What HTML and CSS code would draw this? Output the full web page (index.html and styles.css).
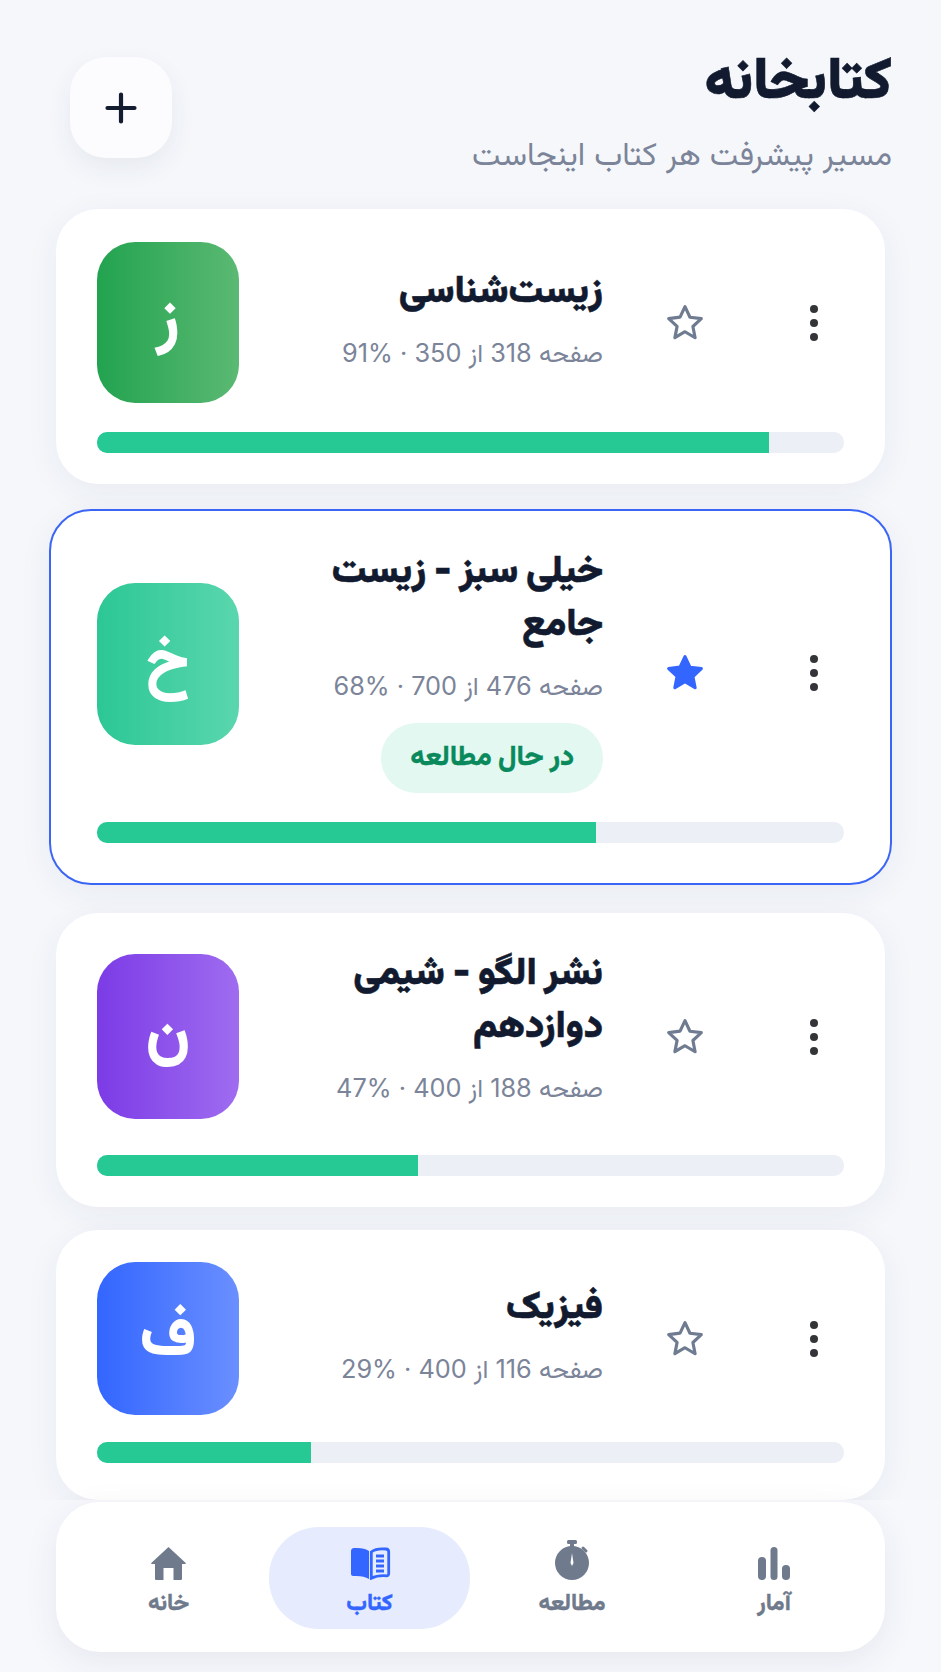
FILE: index.html
```html
<!DOCTYPE html>
<html lang="fa" dir="rtl">
<head>
<meta charset="utf-8">
<title>کتابخانه</title>
<link rel="stylesheet" href="styles.css">
</head>
<body>
<main class="page">
  <header class="header">
    <div class="heading">
      <h1 class="title">کتابخانه</h1>
      <p class="subtitle">مسیر پیشرفت هر کتاب اینجاست</p>
    </div>
    <button class="add" aria-label="افزودن">
      <svg width="32" height="32" viewBox="0 0 32 32"><path d="M16 2.500v27M2.500 16h27" stroke="#141c30" stroke-width="4.200" stroke-linecap="round" fill="none"/></svg>
    </button>
  </header>

  <section class="list">
    <article class="card">
      <div class="row row-a">
        <span class="more"><i></i><i></i><i></i></span>
        <span class="star"><svg width="40" height="40" viewBox="0 0 38 38"><path class="star-o" d="M19 3.500l4.700 10 10.800 1.400-8 7.400 2.100 10.700L19 27.300 9.400 32.900l2.100-10.700-8-7.400 10.800-1.400z"/></svg></span>
        <div class="info">
          <h2 class="book">زیست‌شناسی</h2>
          <p class="meta">صفحه 318 از 350 · <bdi dir="ltr">91%</bdi></p>
        </div>
        <div class="cover green">ز</div>
      </div>
      <div class="track"><div class="fill" style="width:90%"></div></div>
    </article>

    <article class="card active">
      <div class="row row-b">
        <span class="more"><i></i><i></i><i></i></span>
        <span class="star"><svg width="40" height="40" viewBox="0 0 38 38"><path class="star-f" d="M19 3.500l4.700 10 10.800 1.400-8 7.400 2.100 10.700L19 27.300 9.400 32.900l2.100-10.700-8-7.400 10.800-1.400z"/></svg></span>
        <div class="info">
          <h2 class="book">خیلی سبز - زیست جامع</h2>
          <p class="meta">صفحه 476 از 700 · <bdi dir="ltr">68%</bdi></p>
          <span class="pill">در حال مطالعه</span>
        </div>
        <div class="cover mint">خ</div>
      </div>
      <div class="track"><div class="fill" style="width:66.8%"></div></div>
    </article>

    <article class="card">
      <div class="row row-c">
        <span class="more"><i></i><i></i><i></i></span>
        <span class="star"><svg width="40" height="40" viewBox="0 0 38 38"><path class="star-o" d="M19 3.500l4.700 10 10.800 1.400-8 7.400 2.100 10.700L19 27.300 9.400 32.900l2.100-10.700-8-7.400 10.800-1.400z"/></svg></span>
        <div class="info">
          <h2 class="book">نشر الگو - شیمی دوازدهم</h2>
          <p class="meta">صفحه 188 از 400 · <bdi dir="ltr">47%</bdi></p>
        </div>
        <div class="cover purple">ن</div>
      </div>
      <div class="track"><div class="fill" style="width:43%"></div></div>
    </article>

    <article class="card">
      <div class="row row-d">
        <span class="more"><i></i><i></i><i></i></span>
        <span class="star"><svg width="40" height="40" viewBox="0 0 38 38"><path class="star-o" d="M19 3.500l4.700 10 10.800 1.400-8 7.400 2.100 10.700L19 27.300 9.400 32.900l2.100-10.700-8-7.400 10.800-1.400z"/></svg></span>
        <div class="info">
          <h2 class="book">فیزیک</h2>
          <p class="meta">صفحه 116 از 400 · <bdi dir="ltr">29%</bdi></p>
        </div>
        <div class="cover blue">ف</div>
      </div>
      <div class="track"><div class="fill" style="width:28.7%"></div></div>
    </article>
  </section>

  <div class="dock">
    <nav class="nav">
      <a class="tab">
        <svg width="32" height="33" viewBox="0 0 32 33"><rect x="0" y="10" width="8" height="23" rx="4" fill="#6f7a8c"/><rect x="12.500" y="0" width="7" height="33" rx="3.500" fill="#6f7a8c"/><rect x="24" y="18" width="8" height="15" rx="4" fill="#6f7a8c"/></svg>
        <span>آمار</span>
      </a>
      <a class="tab tab-shift tab-watch">
        <svg width="36" height="40" viewBox="0 0 36 40"><rect x="13" y="0" width="10" height="4" rx="1.500" fill="#6f7a8c"/><rect x="16" y="3" width="4" height="5" fill="#6f7a8c"/><path d="M29 8l3 3" stroke="#6f7a8c" stroke-width="3" stroke-linecap="round"/><circle cx="18" cy="23" r="17" fill="#6f7a8c"/><path d="M18 13l1.500 10-1.500 3-1.500-3z" fill="#fff"/></svg>
        <span>مطالعه</span>
      </a>
      <a class="tab on">
        <svg width="42" height="33" viewBox="0 0 42 33"><path d="M20 4C17 1.500 11 .5 5 1 3.500 1.100 2 2 2 4v23c0 1 1 2 2 2 7-.5 12 .5 16 3z" fill="#3366ff"/><path d="M22.300 5c3-2.500 9-3.500 14.700-3 1.500.1 2.700 1 2.700 2.800v22c0 1-1 2-2 2-6.500-.5-11.500.5-15.400 2.500z" fill="none" stroke="#3366ff" stroke-width="2.800"/><path d="M27 9h8M27 14h8M27 19h8M27 24h8" stroke="#3366ff" stroke-width="2.800"/></svg>
        <span>کتاب</span>
      </a>
      <a class="tab tab-shift">
        <svg width="35" height="33" viewBox="0 0 35 33"><path d="M17.500 0L34.700 16a.6.600 0 01-.4 1H31v15a1 1 0 01-1 1h-7.500V21h-10v12H5a1 1 0 01-1-1V17H.7a.6.600 0 01-.4-1z" fill="#6f7a8c"/></svg>
        <span>خانه</span>
      </a>
    </nav>
  </div>
</main>
</body>
</html>
```
FILE: styles.css
```css
* { box-sizing: border-box; }
html, body { margin: 0; height: 100%; }
body {
  background: #f5f7fb;
  font-family: Inter, "Vazirmatn", "Noto Sans Arabic", "DejaVu Sans", sans-serif;
  color: #111a2e;
  overflow: hidden;
}
.page { width: 941px; height: 1672px; padding: 0 56px; display: flex; flex-direction: column; }

.header { display: flex; justify-content: space-between; align-items: flex-start; margin: 0 -7px 0 0; height: 209px; padding: 46px 0 0 14px; }
.heading { text-align: right; }
.title { margin: 0; font-size: 58px; line-height: 62px; font-weight: 900; color: #111a2e; -webkit-text-stroke: .6px #111a2e; }
.subtitle { margin: 27px 0 0; font-size: 32px; line-height: 38px; color: #7b8498; }
.add { width: 102px; height: 101px; margin-top: 11px; border: 0; border-radius: 36px; background: #fcfcfe; box-shadow: 0 10px 26px rgba(40,50,90,.07); display: flex; align-items: center; justify-content: center; padding: 0; }

.list { display: flex; flex-direction: column; gap: 23px; }
.card { background: #fff; border-radius: 42px; padding: 33px 41px 31px; box-shadow: 0 8px 34px rgba(40,50,90,.06); }
.card.active { margin: 2px -7px 5px; padding: 34px 46px 40px; border: 2px solid #3b66f5; }
.row { display: flex; align-items: center; }
.more { width: 60px; display: flex; flex-direction: column; align-items: center; gap: 6px; flex: none; }
.more i { width: 8px; height: 8px; border-radius: 50%; background: #333539; display: block; }
.star { width: 60px; margin-right: 69px; margin-left: 52px; display: flex; justify-content: center; flex: none; }
.star-o { fill: none; stroke: #6f7b90; stroke-width: 3; stroke-linejoin: round; }
.star-f { fill: #3366ff; stroke: #3366ff; stroke-width: 3; stroke-linejoin: round; }
.info { flex: 1; min-width: 0; display: flex; flex-direction: column; align-items: flex-start; padding-left: 24px; margin-top: -10px; }
.book { margin: -3px 0 3px; font-size: 38px; line-height: 53px; font-weight: 900; color: #111a2e; -webkit-text-stroke: .5px #111a2e; }
.meta { margin: 18px 0 0; font-size: 25.3px; line-height: 34px; color: #7b8498; white-space: nowrap; }
.pill { margin-top: 20px; height: 70px; padding: 0 29px; border-radius: 35px; background: #e3f8f0; color: #0a8a5c; font-size: 28px; font-weight: 800; display: flex; align-items: center; white-space: nowrap; -webkit-text-stroke: .3px #0a8a5c; }

.cover { width: 142px; flex: none; border-radius: 38px; color: #fff; font-size: 64px; font-weight: 800; display: flex; align-items: center; justify-content: center; }
.row-a .cover { height: 161px; }
.row-b .info { margin-top: 0; }
.row-b .more, .row-b .star { margin-top: 8px; }
.row-b .cover { height: 162px; margin-bottom: 10px; }
.row-c { margin-top: 8px; }
.row-c .info { margin-top: -22px; }
.row-c .cover { height: 165px; }
.row-c + .track { margin-top: 36px; }
.row-d { margin-top: -1px; }
.row-d .cover { height: 153px; }
.row-d + .track { margin: 27px 0 6px; }
.green { background: linear-gradient(90deg, #22a34f, #5bb973); }
.mint { background: linear-gradient(90deg, #2cc795, #5ad6ad); }
.purple { background: linear-gradient(90deg, #7c3be6, #9f6cf0); }
.blue { background: linear-gradient(90deg, #3366ff, #6a8fff); }

.track { direction: ltr; height: 21px; margin-top: 29px; border-radius: 10px; background: #eceff6; overflow: hidden; }
.fill { height: 100%; background: #26c894; }

.dock { margin: 0 -56px; padding: 2px 56px 20px; flex: none; background: #f7f8fc; position: relative; }
.nav { height: 150px; background: #fff; border-radius: 44px; box-shadow: 0 10px 34px rgba(40,50,90,.08); padding: 25px 41px 23px; display: grid; grid-template-columns: 140px 234px 201px 171px; }
.tab { display: flex; flex-direction: column; align-items: center; justify-content: center; gap: 7px; padding-top: 7px; color: #6f7a8c; font-size: 23px; line-height: 30px; font-weight: 800; -webkit-text-stroke: .3px currentColor; }
.tab-shift { padding-right: 30px; }
.tab-watch svg { margin-top: -7px; }
.tab.on { background: #e6ecfd; color: #3366ff; border-radius: 50px; }
```
